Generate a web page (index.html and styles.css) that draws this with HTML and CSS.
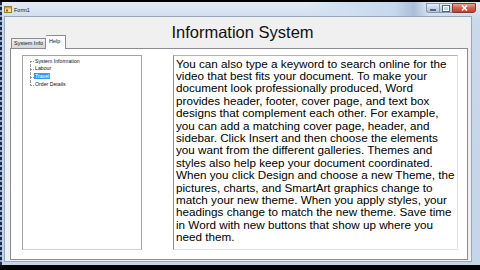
FILE: index.html
```html
<!DOCTYPE html>
<html lang="en">
<head>
  <meta charset="UTF-8">
  <title>Form1</title>
  <link rel="stylesheet" href="styles.css">
</head>
<body>

  <div class="window">
    <div class="titlebar">
      <span class="app-icon">
        <svg width="8" height="7" viewBox="0 0 8 7">
          <rect x="0.5" y="0.5" width="7" height="6" fill="#f4e2a2" stroke="#a07a2c"/>
          <rect x="1" y="1" width="6" height="1.5" fill="#d29a36"/>
          <rect x="2" y="3.5" width="2" height="2" fill="#c0392b"/>
        </svg>
      </span>
      <span class="caption">Form1</span>
      <div class="caption-buttons">
        <span class="cbtn cbtn-min"><i></i></span>
        <span class="cbtn cbtn-max"><i></i></span>
        <span class="cbtn cbtn-close">
          <svg width="7" height="6" viewBox="0 0 7 6">
            <path d="M1 0.5 L6 5.5 M6 0.5 L1 5.5" stroke="#fff" stroke-width="1.6"/>
          </svg>
        </span>
      </div>
    </div>

    <div class="client">
      <h1 class="heading">Information System</h1>

      <div class="tabs">
        <div class="tab">System Info</div>
        <div class="tab active">Help</div>
      </div>

      <div class="tab-page">
        <ul class="tree">
          <li><span>System Information</span></li>
          <li><span>Labour</span></li>
          <li><span class="selected">Travel</span></li>
          <li><span>Order Details</span></li>
        </ul>

        <div class="textbox">You can also type a keyword to search online for the
video that best fits your document. To make your
document look professionally produced, Word
provides header, footer, cover page, and text box
designs that complement each other. For example,
you can add a matching cover page, header, and
sidebar. Click Insert and then choose the elements
you want from the different galleries. Themes and
styles also help keep your document coordinated.
When you click Design and choose a new Theme, the
pictures, charts, and SmartArt graphics change to
match your new theme. When you apply styles, your
headings change to match the new theme. Save time
in Word with new buttons that show up where you
need them.</div>
      </div>
    </div>
  </div>

</body>
</html>
```

FILE: styles.css
```css
body {
  margin: 0;
  background: #000;
  font-family: 'Liberation Sans', Arial, sans-serif;
  height: 270px;
  overflow: hidden;
}

.window {
  margin-top: 2px;
  width: 480px;
  height: 263px;
  box-sizing: border-box;
  padding: 0 8px 3px 4px;
  display: flex;
  flex-direction: column;
  background:
    repeating-linear-gradient(to bottom, #1c2c48 0 3px, #8ea6c6 3px 5px) left / 2px 100% no-repeat,
    linear-gradient(to bottom, #e4ecf5, #c9d8ea 20px, #c4d5e9);
}

.titlebar {
  height: 14px;
  display: flex;
  align-items: center;
  margin-right: -4px;
  background: linear-gradient(to right, transparent 300px, #cfe0f1 340px, #c6d8ec 390px, #a9bfd8 410px, transparent 425px);
}

.app-icon {
  display: flex;
  margin: 1px 2px 0 0;
}

.caption {
  font-size: 5.5px;
  color: #111;
  margin-top: 1px;
}

.caption-buttons {
  margin-left: auto;
  align-self: flex-start;
  margin-top: 1px;
  display: flex;
}

.cbtn {
  height: 10px;
  width: 13px;
  box-sizing: border-box;
  border: 1px solid #8497b0;
  border-right: none;
  background: linear-gradient(to bottom, #e9eff6, #c7d4e4 50%, #b7c7db);
  display: flex;
  align-items: center;
  justify-content: center;
}

.cbtn-min {
  border-radius: 0 0 0 3px;
}

.cbtn-min i {
  width: 6px;
  height: 2px;
  margin-top: 4px;
  background: #fff;
  border: 1px solid #55657a;
  box-sizing: border-box;
}

.cbtn-max i {
  width: 6px;
  height: 5px;
  border: 1px solid #55657a;
  box-shadow: inset 0 0 0 1px #fff;
}

.cbtn-close {
  width: 24px;
  border: 1px solid #7e3a33;
  border-radius: 0 0 3px 0;
  background: linear-gradient(to bottom, #e8a593, #d3604c 50%, #c4412e);
}

.client {
  flex: 1;
  background: #f0f0f0;
  border: 1px solid #97a8bd;
  padding: 0 3px 1px 5px;
  display: flex;
  flex-direction: column;
}

.heading {
  margin: 9px 0 0;
  padding-left: 7px;
  font-size: 16.5px;
  font-weight: normal;
  line-height: 12px;
  text-align: center;
  color: #111;
}

.tabs {
  margin-top: -3px;
  height: 13px;
  padding-left: 1px;
  display: flex;
  align-items: flex-end;
  position: relative;
  z-index: 1;
}

.tab {
  height: 10px;
  padding: 0 2px;
  box-sizing: border-box;
  border: 1px solid #898c95;
  border-bottom: none;
  background: linear-gradient(to bottom, #f3f3f3, #e3e3e3 50%, #d6d6d6);
  font-size: 5.5px;
  line-height: 9px;
  color: #111;
}

.tab.active {
  height: 14px;
  margin-bottom: -1px;
  padding: 0 5px 0 3px;
  border-left: none;
  background: #fff;
  line-height: 10px;
}

.tab-page {
  flex: 1;
  border: 1px solid #898c95;
  background: #fff;
  padding: 6px 9px 9px 11px;
  display: flex;
  gap: 31px;
}

.tree {
  width: 120px;
  box-sizing: border-box;
  margin: 0;
  padding: 1.5px 0 0 7px;
  list-style: none;
  border: 1px solid #a3a3a3;
  border-bottom-color: #d2d2d2;
  background: #fff;
}

.tree li {
  position: relative;
  height: 7.8px;
  padding-left: 4px;
  font-size: 5.2px;
  line-height: 7.8px;
  color: #111;
}

.tree li::before {
  content: "";
  position: absolute;
  left: 0;
  top: 50%;
  width: 4px;
  border-top: 1px dotted #9a9a9a;
}

.tree li::after {
  content: "";
  position: absolute;
  left: 0;
  top: 0;
  bottom: 0;
  border-left: 1px dotted #9a9a9a;
}

.tree li:first-child::after {
  top: 50%;
}

.tree li:last-child::after {
  bottom: 50%;
}

.tree span {
  padding: 0 1px;
}

.tree .selected {
  background: #3399ff;
  color: #fff;
}

.textbox {
  flex: 1;
  border: 1px solid #dfe3e8;
  border-left-color: #8d8d8d;
  border-top-color: #b3b3b3;
  padding: 1.5px 2px;
  background: #fff;
  font-size: 11.7px;
  line-height: 12.4px;
  color: #000;
  white-space: pre;
  overflow: hidden;
}
```
